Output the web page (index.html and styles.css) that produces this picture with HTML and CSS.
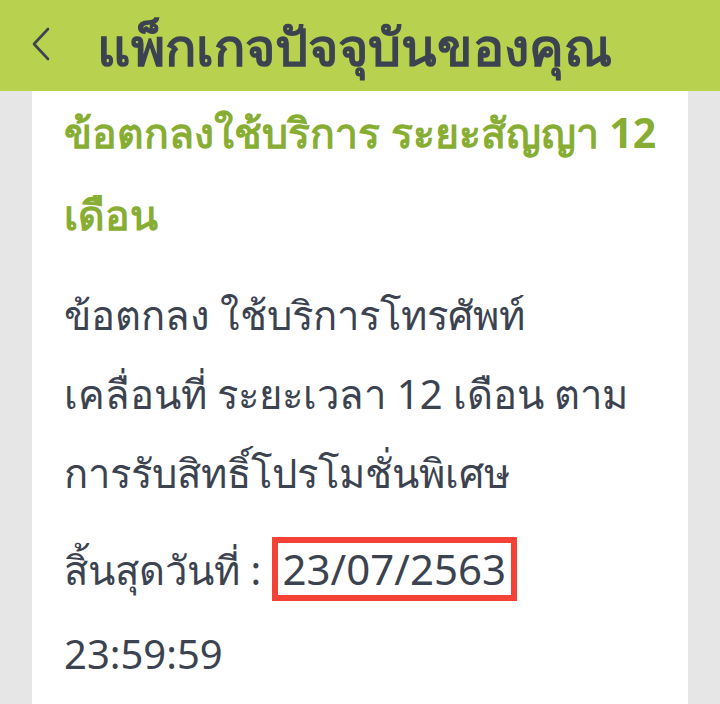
FILE: index.html
```html
<!DOCTYPE html>
<html lang="th">
<head>
<meta charset="utf-8">
<link rel="stylesheet" href="styles.css">
</head>
<body>
<header class="topbar">
  <span class="back">
    <svg width="20" height="36" viewBox="0 0 20 36"><path d="M17 3 L3 18 L17 33" fill="none" stroke="#3c4350" stroke-width="2.6" stroke-linecap="round" stroke-linejoin="round"/></svg>
  </span>
  <h1 class="title">แพ็กเกจปัจจุบันของคุณ</h1>
</header>
<main class="page">
  <section class="card">
    <h2 class="heading">ข้อตกลงใช้บริการ ระยะสัญญา 12<br>เดือน</h2>
    <p class="desc">ข้อตกลง ใช้บริการโทรศัพท์<br>เคลื่อนที่ ระยะเวลา 12 เดือน ตาม<br>การรับสิทธิ์โปรโมชั่นพิเศษ</p>
    <p class="desc end">สิ้นสุดวันที่ : <span class="date">23/07/2563</span><br>23:59:59</p>
  </section>
</main>
</body>
</html>
```
FILE: styles.css
```css
html, body {
  margin: 0;
  padding: 0;
}
body {
  width: 720px;
  height: 704px;
  overflow: hidden;
  background: #e6e6e6;
  font-family: "Noto Sans", "DejaVu Sans", sans-serif;
  color: #3c4350;
}
.topbar {
  height: 91px;
  background: #b8d14f;
  display: flex;
  align-items: center;
  box-sizing: border-box;
  padding-left: 31px;
}
.back {
  display: flex;
  width: 20px;
  margin-right: 46px;
  margin-top: -4px;
}
.title {
  margin: 0;
  font-size: 52px;
  font-weight: 700;
  color: #3c4350;
  line-height: 1;
  white-space: nowrap;
}
.page {
  padding: 0 32px;
}
.card {
  background: #fff;
  padding: 0 16px 20px 32px;
  min-height: 613px;
  box-sizing: border-box;
}
.heading {
  margin: 0;
  font-size: 41px;
  line-height: 82px;
  font-weight: 700;
  color: #88ad33;
  white-space: nowrap;
}
.desc {
  margin: 20px 0 0 0;
  font-size: 40px;
  line-height: 79px;
  color: #3c4350;
  white-space: nowrap;
}
.desc.end {
  margin-top: 16px;
  line-height: 84px;
}
.date {
  display: inline-block;
  font-size: 42px;
  line-height: 52px;
  border: 6px solid #f44336;
  padding: 0 5px;
}
```
